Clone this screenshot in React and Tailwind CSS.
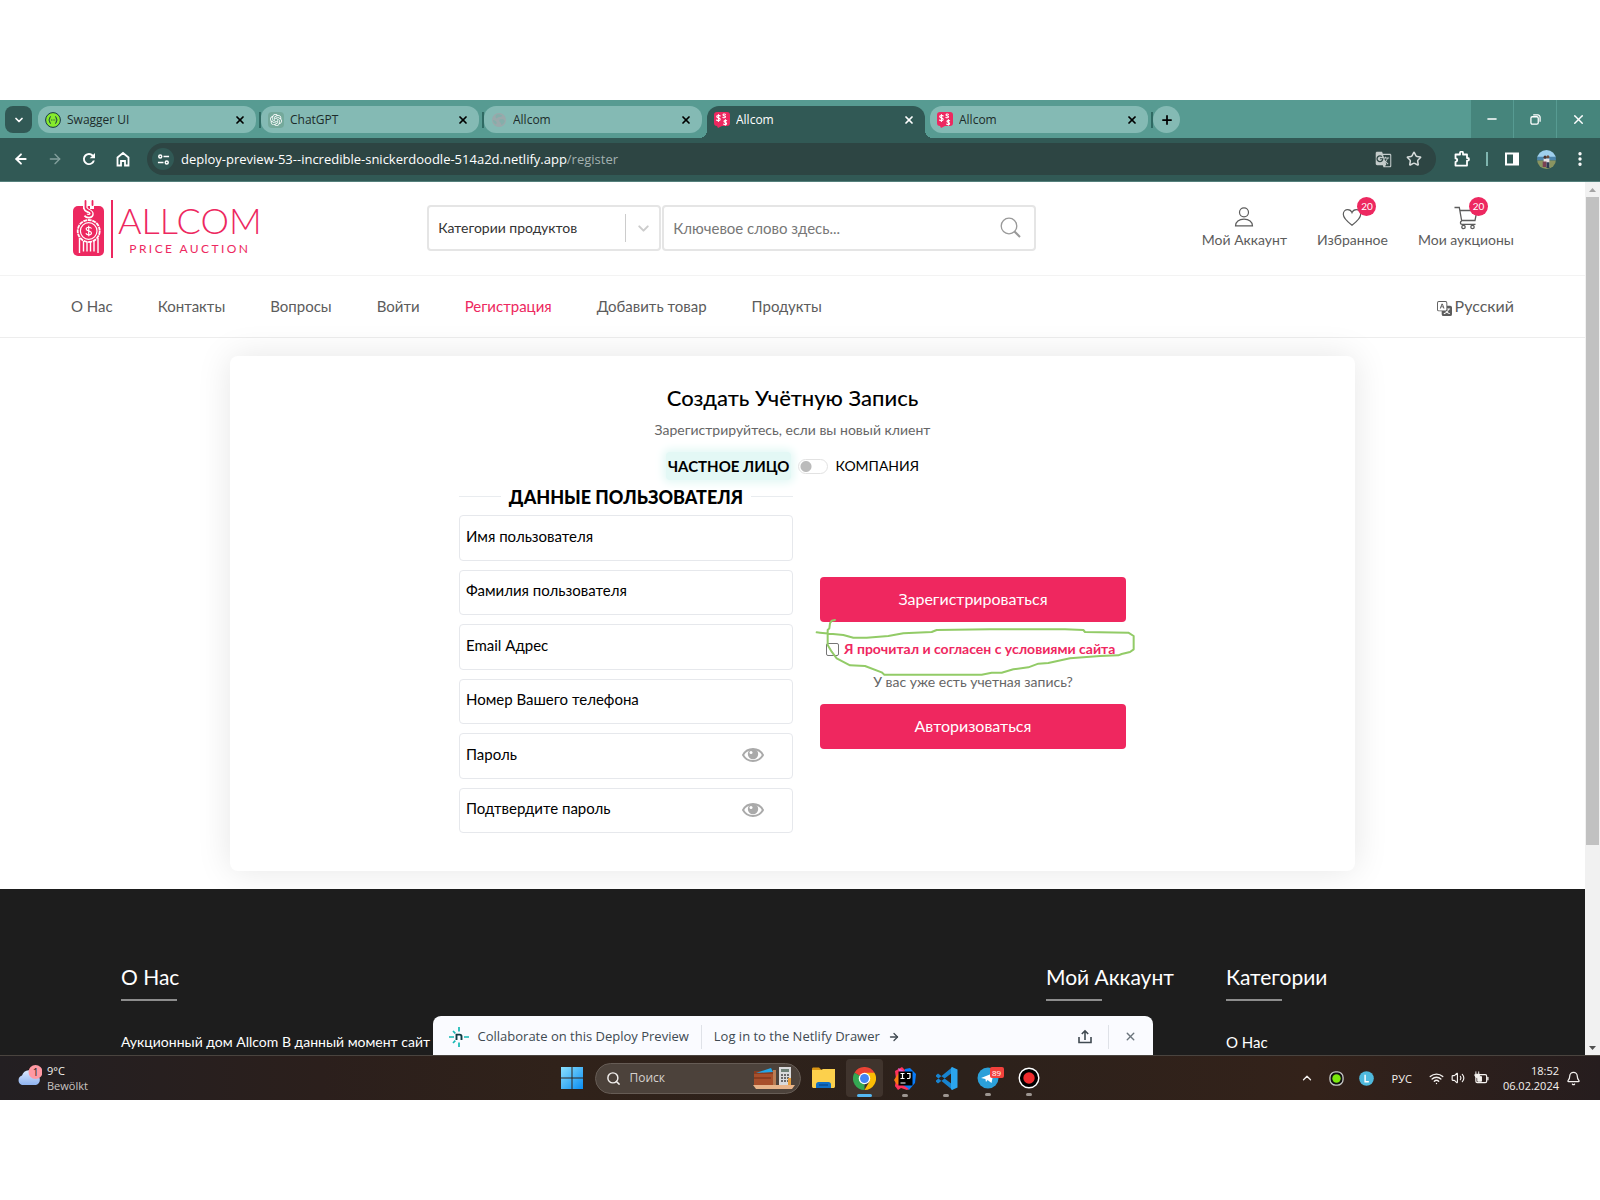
import React from "react";
import {
  ArrowLeft, ArrowRight, ChevronDown, ChevronUp, X, Plus, Star,
  EllipsisVertical, Search, Bell, Wifi, Volume2, Minus,
} from "lucide-react";
import { BsTranslate } from "react-icons/bs";
import { SiOpenai } from "react-icons/si";
import { MdGTranslate } from "react-icons/md";

const UI = "font-['Open_Sans','Noto_Sans',sans-serif]";

function AllcomFavicon() {
  return (
    <svg viewBox="0 0 16 16" className="size-4 shrink-0" aria-hidden="true">
      <path d="M3 0h10a3 3 0 0 1 3 3v8a3 3 0 0 1-3 3H8l-4 2-1-2a3 3 0 0 1-3-3V3a3 3 0 0 1 3-3z" fill="#ed2860" />
      <g stroke="#fff" strokeWidth="1.100" fill="none" strokeLinecap="round">
        <path d="M6.200 4C5 3 2.600 3.300 2.700 4.700s3.500 1 3.500 2.600-2.600 1.700-3.700.7M4.400 2.500v7" />
        <path d="M11.500 2.400c-1-.8-2.700-.3-2.400.7s2.400.5 2.400 1.600-1.800 1.300-2.600.6" />
        <path d="M12.600 8.700c-1-.8-3-.2-2.600 1s2.700.6 2.600 1.900-2 1.400-3 .5M11.400 7.600v5.500" />
      </g>
    </svg>
  );
}

function SwaggerIcon() {
  return (
    <svg viewBox="0 0 16 16" className="size-4 shrink-0" aria-hidden="true">
      <circle cx="8" cy="8" r="7.400" fill="#85ea2d" stroke="#173647" strokeWidth="1" />
      <path d="M5.800 4.500c-1.400 0-.6 2.600-2 3.500 1.400.9.600 3.500 2 3.500M10.200 4.500c1.400 0 .6 2.600 2 3.500-1.400.9-.6 3.500-2 3.500" fill="none" stroke="#173647" strokeWidth="1" />
      <path d="M6 8h.8M7.700 8h.8M9.400 8h.8" stroke="#173647" strokeWidth="1" />
    </svg>
  );
}

function GptIcon() {
  return (
    <span className="flex size-4 shrink-0 items-center justify-center rounded-sm bg-[#74a99b] text-white">
      <SiOpenai className="size-3" />
    </span>
  );
}

function GlobeIcon() {
  return (
    <svg viewBox="0 0 16 16" className="size-4 shrink-0" aria-hidden="true">
      <circle cx="8" cy="8" r="7" fill="#9aa9ab" />
      <path d="M6 2.500c2-.6 4 .2 5 1s-1.500 1.500-3 1.600-1.500 1.400-2.500 1.200S4 3.200 6 2.500zM9 7.500c1.500-.6 4 0 4.600 1s-.8 3.200-2.300 4-1.200-1.200-2-2-1.800-2.400-.3-3zM2 8c1.500 0 3 1 3.500 2s0 2.500-1 2.200S1.500 9 2 8z" fill="#84aeaa" />
    </svg>
  );
}

const tabs = [
  { title: "Swagger UI", icon: <SwaggerIcon />, sep: true },
  { title: "ChatGPT", icon: <GptIcon />, sep: true },
  { title: "Allcom", icon: <GlobeIcon /> },
  { title: "Allcom", icon: <AllcomFavicon />, active: true },
  { title: "Allcom", icon: <AllcomFavicon />, sep: true },
];

function Tab({ title, icon, active, sep }) {
  return (
    <div className="flex max-w-[223px] min-w-0 flex-1 items-start">
      <div
        className={
          active
            ? "relative flex h-8 flex-1 items-start rounded-t-xl bg-[#315955] pr-[10px] pl-[7px] text-white"
            : "flex h-[27px] flex-1 items-start rounded-xl bg-[#84bab4] pr-[10px] pl-[7px] text-[#1c2b2a]"
        }
      >
        {active && (
          <>
            <span className="absolute -left-2 bottom-0 size-2 bg-[radial-gradient(circle_at_0_0,transparent_8px,#315955_8px)]" />
            <span className="absolute -right-2 bottom-0 size-2 bg-[radial-gradient(circle_at_100%_0,transparent_8px,#315955_8px)]" />
          </>
        )}
        <div className="flex h-[27px] flex-1 items-center gap-[6px]">
          {icon}
          <span className="flex-1 truncate text-xs leading-5">{title}</span>
          <button aria-label="Закрыть вкладку" className={active ? "text-white" : "text-black"}>
            <X className="size-3" strokeWidth={3.500} />
          </button>
        </div>
      </div>
      <span className="flex h-[27px] w-[5px] items-center justify-end">
        {sep && <span className="h-4 w-[2px] bg-[#2f6a63]" />}
      </span>
    </div>
  );
}

function BrowserChrome() {
  return (
    <header className={UI}>
      <div className="flex h-[38px] items-start bg-[#579b92] pl-[5px]">
        <button aria-label="Поиск вкладок" className="mt-[6px] mr-[6px] flex size-[27px] items-center justify-center rounded-lg bg-[#315955] text-white">
          <ChevronDown className="size-3" strokeWidth={3.500} />
        </button>
        <div className="flex min-w-0 flex-1 gap-0 pt-[6px]">
          {tabs.map((t, i) => <Tab key={i} {...t} />)}
          <button aria-label="Новая вкладка" className="flex size-[27px] items-center justify-center rounded-full bg-[#84bab4] text-black">
            <Plus className="size-[14px]" strokeWidth={3} />
          </button>
        </div>
        <div className="flex h-[38px] shrink-0 gap-px text-white">
          <button aria-label="Свернуть" className="flex w-[42px] items-center justify-center bg-[#46857c]"><Minus className="size-[14px]" strokeWidth={2.500} /></button>
          <button aria-label="Восстановить" className="flex w-[42px] items-center justify-center bg-[#46857c]">
            <svg viewBox="0 0 12 12" className="size-[11px]" fill="none" stroke="currentColor" strokeWidth="1.400"><rect x="1" y="3" width="8" height="8" rx="1.500" /><path d="M3.500 1h5A2.500 2.500 0 0 1 11 3.500v5" /></svg>
          </button>
          <button aria-label="Закрыть" className="flex w-[43px] items-center justify-center bg-[#46857c]"><X className="size-[15px]" strokeWidth={2.200} /></button>
        </div>
      </div>
      <div className="flex h-11 items-center border-b border-[#55807c] bg-[#315955] pb-px pl-[13px] text-white">
        <div className="flex items-center gap-[18px]">
          <button aria-label="Назад"><ArrowLeft className="size-4" strokeWidth={2.800} /></button>
          <button aria-label="Вперёд" className="text-[#84a09d]"><ArrowRight className="size-4" strokeWidth={2} /></button>
          <button aria-label="Обновить">
            <svg viewBox="0 0 24 24" className="size-4" fill="currentColor"><path d="M12 3a9 9 0 1 0 8.700 11.300h-2.900A6.200 6.200 0 1 1 16.300 7.700L13 11h8V3l-2.700 2.700A9 9 0 0 0 12 3z" /></svg>
          </button>
          <button aria-label="Домой"><svg viewBox="0 0 16 16" className="size-4" fill="none" stroke="currentColor" strokeWidth="1.800"><path d="M2.500 6.500 8 2l5.500 4.500v8h-3.500v-4.500h-4v4.500h-3.500z" /></svg></button>
        </div>
        <div className="ml-4 flex h-8 flex-1 items-center rounded-full bg-[#2d4543] pr-[14px] pl-[5px]">
          <span className="flex size-[22px] items-center justify-center rounded-full bg-[#315955]">
            <svg viewBox="0 0 14 14" className="size-[13px]" fill="none" stroke="#fff" strokeWidth="1.600"><circle cx="3.500" cy="3.800" r="1.600" /><path d="M7 3.800h6M1 10.200h6" /><circle cx="10.500" cy="10.200" r="1.600" /></svg>
          </span>
          <span className="ml-[7px] flex-1 text-[13px] leading-5">
            deploy-preview-53--incredible-snickerdoodle-514a2d.netlify.app<span className="text-[#a3b1b0]">/register</span>
          </span>
          <button aria-label="Перевести" className="text-[#c4cccb]"><MdGTranslate className="size-[17px]" /></button>
          <button aria-label="В закладки" className="ml-[14px] text-[#d5dbda]"><Star className="size-4" strokeWidth={2.300} /></button>
        </div>
        <button aria-label="Расширения" className="ml-[18px]"><svg viewBox="0 0 16 16" className="size-4" fill="none" stroke="currentColor" strokeWidth="1.800" strokeLinejoin="round"><path d="M1.500 3.500H6V2a1 1 0 0 1 3 0v1.500h4V7h.7a1.300 1.300 0 0 1 0 2.600H13v5H1.500v-3.800a1.700 1.700 0 0 0 0-3.400z" /></svg></button>
        <span className="ml-4 h-[14px] w-[2px] bg-[#7fb5af]" />
        <button aria-label="Боковая панель" className="ml-4"><svg viewBox="0 0 16 16" className="size-4"><path d="M1 1.500h14v13H1z" fill="#fff" /><path d="M3 3.500h6v9H3z" fill="#315955" /></svg></button>
        <button aria-label="Профиль" className="ml-[17px]">
          <svg viewBox="0 0 20 20" className="size-[19px]"><defs><clipPath id="av"><circle cx="10" cy="10" r="10" /></clipPath></defs><g clipPath="url(#av)"><path d="M0 0h20v8H0z" fill="#9fd0ee" /><path d="M0 7h20v4H0z" fill="#4c86ad" /><path d="M0 11h20v9H0z" fill="#8a9560" /><path d="M7 9h6v9H7z" fill="#e5e1e4" /><path d="M6 12h4v6H6z" fill="#7b4252" /><path d="M10 13h3v6h-3z" fill="#2e3a52" /><circle cx="8.500" cy="7.500" r="1.600" fill="#4a3530" /><circle cx="11.500" cy="7" r="1.600" fill="#6b4a3c" /></g></svg>
        </button>
        <button aria-label="Меню" className="mr-[11px] ml-[15px]"><EllipsisVertical className="size-[18px]" strokeWidth={2.500} /></button>
      </div>
    </header>
  );
}

function Logo() {
  return (
    <a href="#" aria-label="Allcom Price Auction" className="flex items-center text-[#ed2860]">
      <svg viewBox="0 0 42 58" className="h-[58px] w-[42px]" aria-hidden="true">
        <rect x="2" y="6" width="31" height="50" rx="5" fill="#ed2860" />
        <path d="M14 0v9M21 0v9" stroke="#fff" strokeWidth="4" />
        <path d="M14.500 3v5c0 3.500 6 2.500 6 6 0 2.600-4 3.300-6 .8" fill="none" stroke="#fff" strokeWidth="4.500" />
        <path d="M14.500 1v6.500c0 3.500 6 2.500 6 6 0 2.600-4 3.300-6 .8M21.500 1v4" fill="none" stroke="#ed2860" strokeWidth="1.800" strokeLinecap="round" />
        <path d="M8.500 38v15M12.500 41v10.500M16 41v10.500M19.500 41v10.500M23 41v10.500M27 38v15" stroke="#fff" strokeWidth="1.400" />
        <circle cx="17.700" cy="31" r="11" fill="#ed2860" stroke="#fff" strokeWidth="1.800" strokeDasharray="3.900 .7" />
        <circle cx="17.700" cy="31" r="8.300" fill="none" stroke="#fff" strokeWidth="1.200" />
        <path d="M20.500 28.700c-.6-2-5.300-2-5.300.3s5.300 1.500 5.300 4-4.700 2.500-5.600.2M17.700 25.800v10.500" fill="none" stroke="#fff" strokeWidth="1.200" />
        <path d="M41 0v58" stroke="#ed2860" strokeWidth="2" />
      </svg>
      <span className="flex flex-col items-center pb-1 pl-[5px]">
        <span className="text-4xl leading-[44px] font-light">ALLCOM</span>
        <span className="text-xs leading-[14px] tracking-[0.2em]">PRICE AUCTION</span>
      </span>
    </a>
  );
}

function Action({ label, badge, children }) {
  return (
    <a href="#" className="flex flex-col items-center text-sm leading-5 text-[#5c5c5c]">
      <span className="relative h-6">
        {children}
        {badge && (
          <span className="absolute -top-[9px] left-[15px] flex size-[19px] items-center justify-center rounded-full bg-[#ed2860] text-[10px] leading-none text-white">{badge}</span>
        )}
      </span>
      {label}
    </a>
  );
}

function SiteHeader() {
  return (
    <div className="flex h-[94px] items-center justify-between border-b border-[#f3f3f3] px-[71px]">
      <Logo />
      <form className="flex gap-px pb-px">
        <div className="relative">
          <select aria-label="Категории продуктов" className="h-[46px] w-[234px] appearance-none rounded border-2 border-[#e5e5e5] bg-white pl-[9px] text-sm text-[#333]">
            <option>Категории продуктов</option>
          </select>
          <span className="pointer-events-none absolute inset-y-[9px] right-[9px] flex items-center border-l border-[#ccc] pl-[9px] text-[#ccc]">
            <ChevronDown className="size-[17px]" strokeWidth={2.800} />
          </span>
        </div>
        <div className="relative">
          <input aria-label="Ключевое слово" placeholder="Ключевое слово здесь..." className="h-[46px] w-[374px] rounded border-2 border-[#e5e5e5] pl-[9px] text-[15px] placeholder:text-[#777]" />
          <button type="button" aria-label="Найти" className="absolute top-[12px] right-[15px] text-[#999]"><svg viewBox="0 0 21 21" className="size-[21px]" fill="none" stroke="currentColor" strokeWidth="1.300"><circle cx="9" cy="9" r="7.800" /><path d="m14.500 14.500 5.500 5.500" strokeWidth="2" /></svg></button>
        </div>
      </form>
      <div className="flex gap-[30px] pb-[2px]">
        <Action label="Мой Аккаунт">
          <svg viewBox="0 0 20 22" className="h-[22px] w-5" fill="none" stroke="currentColor" strokeWidth="1.200"><circle cx="10" cy="6.300" r="4.500" /><path d="M1.500 19.900c0-4 3.500-6.700 8.500-6.700s8.500 2.700 8.500 6.700z" /></svg>
        </Action>
        <Action label="Избранное" badge="20">
          <svg viewBox="0 0 20 22" className="h-[22px] w-5" fill="none" stroke="currentColor" strokeWidth="1.200"><path d="M10 19.200C5 15.500 1.300 12 1.300 8.300 1.300 5.500 3.300 3.600 5.700 3.600c1.900 0 3.500 1 4.300 3 .8-2 2.400-3 4.300-3 2.400 0 4.400 1.900 4.400 4.700 0 3.700-3.700 7.200-8.700 10.900z" /></svg>
        </Action>
        <Action label="Мои аукционы" badge="20">
          <svg viewBox="0 0 24 24" className="h-6 w-6" fill="none" stroke="currentColor" strokeWidth="1.300"><path d="M.5 1.500h4.800l2.400 13.500M6 4.500h17l-2 10H7.700M7.700 15c-1.800.5-1.700 3.300.3 3.300h13.500" /><circle cx="9.500" cy="21" r="1.700" /><circle cx="18.500" cy="21" r="1.700" /></svg>
        </Action>
      </div>
    </div>
  );
}

const links = ["О Нас", "Контакты", "Вопросы", "Войти", "Регистрация", "Добавить товар", "Продукты"];

function Nav() {
  return (
    <nav className="flex h-[62px] items-center justify-between border-b border-[#ededed] px-[71px] pb-px text-base text-[#5c5c5c]">
      <div className="flex gap-[45px] text-[15px]">
        {links.map((l) => (
          <a key={l} href="#" className={l === "Регистрация" ? "text-[#ed2860]" : ""}>{l}</a>
        ))}
      </div>
      <button className="flex items-center gap-[3px]"><BsTranslate className="mt-1 size-[15px]" />Русский</button>
    </nav>
  );
}

function Eye() {
  return (
    <svg viewBox="0 0 22 14" className="h-[14px] w-[22px]" aria-hidden="true">
      <path d="M1 7C3.200 3 6.800 1 11 1S18.800 3 21 7c-2.200 4-5.800 6-10 6S3.200 11 1 7z" fill="none" stroke="#aaa" strokeWidth="1.900" />
      <circle cx="11" cy="6" r="5.200" fill="#aaa" /><circle cx="9" cy="4.600" r="1.500" fill="#fff" />
    </svg>
  );
}

const fields = [
  { label: "Имя пользователя" },
  { label: "Фамилия пользователя" },
  { label: "Email Адрес" },
  { label: "Номер Вашего телефона" },
  { label: "Пароль", secret: true },
  { label: "Подтвердите пароль", secret: true },
];

function Register() {
  return (
    <main className="flex justify-center px-[230px] py-[18px]">
      <form className="flex flex-1 flex-col items-center rounded-lg bg-white pt-[26px] pb-[38px] shadow-[0_0_35px_rgba(0,0,0,0.1)]">
        <h1 className="text-[22px] leading-8 font-medium text-black">Создать Учётную Запись</h1>
        <p className="mt-1 text-sm leading-6 text-[#666]">Зарегистрируйтесь, если вы новый клиент</p>
        <div className="mt-[10px] flex items-center gap-[7px] text-sm leading-7 text-black">
          <span className="rounded bg-[#e3f8f5] px-[2px] text-[15px] font-bold shadow-[0_0_8px_3px_#e3f8f5]">ЧАСТНОЕ ЛИЦО</span>
          <input type="checkbox" role="switch" aria-label="Компания" className="h-[15px] w-[30px] appearance-none rounded-full border border-[#e2e2e2] bg-[radial-gradient(circle_at_7px_50%,#bbb_5px,transparent_6px)]" />
          <span>КОМПАНИЯ</span>
        </div>
        <div className="grid grid-cols-[334px_306px] gap-[27px]">
          <div>
            <h2 className="flex h-[35px] items-center gap-2 pb-[2px] text-lg font-black text-black before:h-px before:flex-1 before:bg-[#e9ecef] after:h-px after:flex-1 after:bg-[#e9ecef]">ДАННЫЕ ПОЛЬЗОВАТЕЛЯ</h2>
            <div className="grid h-[318px] gap-[9px]">
              {fields.map((f) => (
                <div key={f.label} className="relative flex">
                  <input type={f.secret ? "password" : "text"} aria-label={f.label} placeholder={f.label} className="min-w-0 flex-1 rounded border border-[#e6e8ec] px-[6px] pb-1 text-[15px] placeholder:text-black" />
                  {f.secret && <button type="button" aria-label="Показать пароль" className="absolute inset-y-0 right-[29px] flex items-center pb-px"><Eye /></button>}
                </div>
              ))}
            </div>
          </div>
          <div className="relative flex flex-col pt-[97px] text-center">
            <button type="button" className="h-[45px] rounded bg-[#ef275f] pb-[2px] text-base text-white">Зарегистрироваться</button>
            <label className="mt-[17px] flex items-center gap-[5px] pl-[6px] text-sm leading-5 font-bold text-[#ef275f]">
              <input type="checkbox" className="size-[13px] appearance-none rounded-[2px] border border-[#767676] bg-white" />
              Я прочитал и согласен с условиями сайта
            </label>
            <p className="mt-[13px] text-sm leading-5 text-[#666]">У вас уже есть учетная запись?</p>
            <button type="button" className="mt-3 h-[45px] rounded bg-[#ef275f] pb-[2px] text-base text-white">Авторизоваться</button>
            <svg viewBox="45 174 960 180" className="pointer-events-none absolute top-[138px] -left-[5px] h-[60px] w-[320px]" fill="none" stroke="#92cb67" strokeWidth="6" strokeLinecap="round" strokeLinejoin="round" aria-hidden="true">
              <path d="M105 180 95 182 90 190 88 205 83 210V255L95 275 110 295 150 316 195 318 245 337 253 344H545L575 338H605L640 328 685 322 715 311 745 309 810 295 900 288 955 286 965 282 990 276 1001 268V228L985 218 855 216 850 210 795 208H570L410 210 395 216 310 220 265 228 200 233H160L130 225 60 218 50 217" />
            </svg>
          </div>
        </div>
      </form>
    </main>
  );
}

function FooterTitle({ children }) {
  return <h3 className="flex flex-col gap-[6px] text-[21px] leading-8 after:h-[2px] after:w-14 after:bg-[#8d8d8d]">{children}</h3>;
}

function Footer() {
  return (
    <footer className="grid flex-1 grid-cols-[1fr_180px_238px] bg-[#1d1d1d] px-[121px] pt-[72px] pb-px text-[15px] text-white">
      <div><FooterTitle>О Нас</FooterTitle><p className="mt-[31px] text-sm leading-5">Аукционный дом Allcom В данный момент сайт</p></div>
      <div><FooterTitle>Мой Аккаунт</FooterTitle></div>
      <div><FooterTitle>Категории</FooterTitle><a href="#" className="mt-[31px] block leading-5">О Нас</a></div>
    </footer>
  );
}

function NetlifyDrawer() {
  const rays = "M11 1v4.500M11 16.500V21M1 11h5M16 11h5M5 5l2.300 2.300M5 17l2.300-2.300";
  return (
    <div className={"absolute bottom-0 left-1/2 flex h-[39px] w-[720px] -translate-x-1/2 items-center rounded-t-lg bg-[#fafbff] pt-[2px] pl-[15px] text-[13px] text-[#404a52] " + UI}>
      <svg viewBox="0 0 22 22" className="size-[22px]" fill="none" aria-hidden="true"><path d={rays} stroke="#15b8b4" strokeWidth="1.700" /><path d="M8.500 14V8.600h3.200c1.200 0 1.800.7 1.800 1.800V14" stroke="#0e3b44" strokeWidth="1.900" /></svg>
      <button className="ml-2">Collaborate on this Deploy Preview</button>
      <span className="mx-3 h-6 w-px bg-[#dfe2e8]" />
      <a href="#" className="flex items-center gap-2">Log in to the Netlify Drawer <ArrowRight className="size-3" strokeWidth={2.600} /></a>
      <span className="flex-1" />
      <button aria-label="Поделиться"><svg viewBox="0 0 16 16" className="size-4" fill="none" stroke="currentColor" strokeWidth="1.600"><path d="M2 8v5.500h12V8M8 11V2M4.800 5 8 1.800 11.200 5" /></svg></button>
      <span className="mx-[15px] h-6 w-px bg-[#dfe2e8]" />
      <button aria-label="Закрыть панель" className="mr-4 text-[#6b747c]"><X className="size-[13px]" strokeWidth={2.600} /></button>
    </div>
  );
}

function Scrollbar() {
  return (
    <div className="flex w-[15px] shrink-0 flex-col bg-[#f1f1f1]" aria-hidden="true">
      <svg viewBox="0 0 15 15" className="size-[15px]"><path d="M4 10l3.500-4L11 10z" fill="#a3a3a3" /></svg>
      <span className="mx-px flex-[648] bg-[#c1c1c1]" />
      <span className="flex-[195]" />
      <svg viewBox="0 0 15 15" className="size-[15px]"><path d="M4 6l3.500 4L11 6z" fill="#505050" /></svg>
    </div>
  );
}

function Running() {
  return <span className="absolute -bottom-[7px] left-1/2 h-[3px] w-[6px] -translate-x-1/2 rounded-full bg-[#9d9691]" />;
}

function Taskbar() {
  return (
    <footer className={"flex h-[45px] items-center border-t border-[#4a443f] bg-[linear-gradient(90deg,#231f22,#2b1f1c_20%,#30221a_35%,#2c211b_60%,#33221a_82%,#261d1e)] text-[#f4f1ef] " + UI}>
      <button className="flex flex-1 items-center gap-[5px] pl-4 text-left text-[11px] leading-[15px]">
        <svg viewBox="0 0 26 26" className="size-[26px]" aria-hidden="true">
          <defs><linearGradient id="cl" x1="0" x2="0" y1="0" y2="1"><stop offset="0" stopColor="#dbe9ff" /><stop offset="1" stopColor="#8fb3f0" /></linearGradient></defs>
          <path d="M6 20a5 5 0 0 1 0-9.500 7.500 7.500 0 0 1 14-1A5.500 5.500 0 0 1 20 20z" fill="url(#cl)" />
          <circle cx="19.500" cy="7" r="7" fill="#ff99a4" /><text x="19.500" y="11" textAnchor="middle" fontSize="10" fill="#222">1</text>
        </svg>
        <span>9°C<br /><span className="text-[#c9c4c1]">Bewölkt</span></span>
      </button>
      <div className="flex items-center pl-[3px]">
        <button aria-label="Пуск"><svg viewBox="0 0 22 22" className="size-[22px]"><defs><linearGradient id="wn" x1="0" y1="0" x2="1" y2="1"><stop offset="0" stopColor="#8be0fd" /><stop offset="1" stopColor="#0a8df2" /></linearGradient></defs><path d="M0 0h10.500v10.500H0zM11.500 0H22v10.500H11.500zM0 11.500h10.500V22H0zM11.500 11.500H22V22H11.500z" fill="url(#wn)" /></svg></button>
        <label className="ml-[12px] flex h-[31px] w-[206px] items-center rounded-full border border-[#665c55] bg-[#4c423b] pl-[10px]">
          <Search className="size-[15px] shrink-0" strokeWidth={2.300} />
          <input aria-label="Поиск" placeholder="Поиск" className="ml-[9px] w-0 flex-1 bg-transparent text-xs placeholder:text-[#d6d1ce]" />
          <svg viewBox="0 0 42 24" className="mr-[5px] h-6 w-[42px]" aria-hidden="true">
            <path d="M1 5h21v14H1z" fill="#a84f2b" /><path d="M1 5h21v3H1z" fill="#8a3d20" /><path d="M3 7 18 2l2 4z" fill="#22a6e8" /><path d="M1 11h17v2H1z" fill="#8a3d20" /><path d="M20 4h3v15h-3z" fill="#b97d55" /><path d="M0 19h42l-3 4H3z" fill="#e8b48a" />
            <rect x="26" y="1" width="12" height="18" fill="#d9dadc" /><path d="M28 3h8v3h-8z" fill="#6f8178" /><path d="M28 9h8M28 12h8M28 15h8" stroke="#444" strokeWidth="1.500" strokeDasharray="2 1" /><path d="M35 12h3v7h-3z" fill="#e79d3b" />
          </svg>
        </label>
        <button aria-label="Проводник" className="ml-[11px]"><svg viewBox="0 0 23 22" className="h-[22px] w-[23px]"><path d="M0 2c0-1 .5-1.500 1.500-1.500H7L9.500 3H0z" fill="#d99513" /><path d="M0 3h9l2-1h12v17c0 1.500-.5 2-2 2H2c-1.500 0-2-.5-2-2z" fill="#fcd04c" /><path d="M4 21v-3.500c0-1.500 1-2.500 2.500-2.500h10c1.500 0 2.500 1 2.500 2.500V21z" fill="#0f6fc5" /><path d="M7 18h9" stroke="#0b4d92" strokeWidth="1.500" /></svg></button>
        <button aria-label="Chrome" className="relative ml-[11px] flex h-[38px] w-[37px] items-center justify-center rounded bg-[#40342d]">
          <svg viewBox="0 0 48 48" className="size-[23px]"><path d="M24 24 3.200 12A24 24 0 0 1 44.800 12z" fill="#ea4335" /><path d="M24 24 24 48A24 24 0 0 1 3.200 12z" fill="#34a853" /><path d="M24 12h20.800A24 24 0 0 1 24 48L34.400 30z" fill="#fbbc05" /><circle cx="24" cy="24" r="12" fill="#fff" /><circle cx="24" cy="24" r="9.300" fill="#4285f4" /></svg>
          <span className="absolute bottom-0 left-[11px] h-[3px] w-[15px] rounded-full bg-[#55b8f2]" />
        </button>
        <button aria-label="IntelliJ IDEA" className="relative ml-[11px]">
          <svg viewBox="0 0 23 23" className="size-[23px]"><path d="M1 4 8 0l6 6-9 15-4-2 1-7z" fill="#fe315d" /><path d="M0 13l6-9 5 8-6 9z" fill="#f97a12" /><path d="M11 2l5-1 6 6-1 9-6 7-7-5z" fill="#087cfa" /><path d="M4 1l6 3-3 6z" fill="#e05bd0" /><path d="M1 19l5-3 9 6-2 1-6-2-3 2z" fill="#fe315d" /><path d="M4.500 4.500h14v14h-14z" fill="#000" /><path d="M6.500 6.500h4M8.500 6.500v5M6.500 11.500h4M13 6.500h3v4q0 1-1.300 1H13M6.500 16h5" stroke="#fff" strokeWidth="1.200" fill="none" /></svg><Running />
        </button>
        <button aria-label="Visual Studio Code" className="relative ml-[18px]">
          <svg viewBox="0 0 23 23" className="size-[23px]"><path d="M1 8.200 3 6.500 17.500 17.500V23L1 9.500zM1 14.800 3 16.500 17.500 5.500V0L1 13.500z" fill="#1884d0" /><path d="M17 0l5.500 2.500v18L17 23l-1-1V1z" fill="#2ba5ee" /></svg><Running />
        </button>
        <button aria-label="Telegram" className="relative ml-[19px]">
          <svg viewBox="0 0 22 22" className="size-[22px]"><circle cx="11" cy="11" r="10.500" fill="#2ba0d9" /><path d="M4 11 16.500 6 14.500 16l-4-3-1.500 2-.6-3z" fill="#fff" /></svg>
          <span className="absolute top-0 left-[13px] flex h-[11px] w-[14px] items-center justify-center rounded-[2px] bg-[#f2413c] text-[8px] leading-none text-white">89</span><Running />
        </button>
        <button aria-label="Запись экрана" className="relative ml-[19px]">
          <svg viewBox="0 0 22 22" className="size-[22px]"><circle cx="11" cy="11" r="9.800" fill="#000" stroke="#fff" strokeWidth="1.400" /><circle cx="11" cy="11" r="5.700" fill="#ef2b2d" /></svg><Running />
        </button>
      </div>
      <div className="flex flex-1 items-center justify-end pr-[19px] text-[11px] leading-[15px]">
        <button aria-label="Скрытые значки"><ChevronUp className="size-[14px]" strokeWidth={2.200} /></button>
        <svg viewBox="0 0 16 16" className="ml-[15px] size-[15px]" aria-hidden="true"><rect x="1" y="1" width="14" height="14" rx="6" fill="#111" stroke="#c7c7c7" strokeWidth="1.400" /><circle cx="8" cy="8" r="4.500" fill="#7be80c" /></svg>
        <svg viewBox="0 0 16 16" className="ml-[15px] size-[15px]" aria-hidden="true"><circle cx="8" cy="8" r="7.800" fill="#4fb9dd" /><path d="M6.500 4v7.500h4" stroke="#fff" strokeWidth="1.500" fill="none" /></svg>
        <button className="ml-[18px]">РУС</button>
        <Wifi className="ml-[17px] size-[15px]" strokeWidth={2.200} />
        <Volume2 className="ml-[7px] size-[14px]" strokeWidth={2} />
        <svg viewBox="0 0 16 14" className="ml-[9px] h-[14px] w-[15px]" fill="none" stroke="currentColor" aria-hidden="true"><rect x="2" y="3.500" width="11.500" height="8.500" rx="1.500" strokeWidth="1.300" /><path d="M14.800 6v3.500" strokeWidth="1.400" /><path d="M4 5.500h4v5H4z" fill="currentColor" /><path d="M2 0v3M5 0v3M1 3h5v2L3.500 7 1 5z" fill="currentColor" /></svg>
        <span className="ml-[14px] text-right">18:52<br />06.02.2024</span>
        <Bell className="ml-[7px] size-[15px]" strokeWidth={2} />
      </div>
    </footer>
  );
}

export default function App() {
  return (
    <div className="flex min-h-screen flex-col bg-white py-[100px] font-['Lato',sans-serif]">
      <BrowserChrome />
      <div className="flex flex-1">
        <div className="relative flex min-w-0 flex-1 flex-col bg-white">
          <SiteHeader />
          <Nav />
          <Register />
          <Footer />
          <NetlifyDrawer />
        </div>
        <Scrollbar />
      </div>
      <Taskbar />
    </div>
  );
}
